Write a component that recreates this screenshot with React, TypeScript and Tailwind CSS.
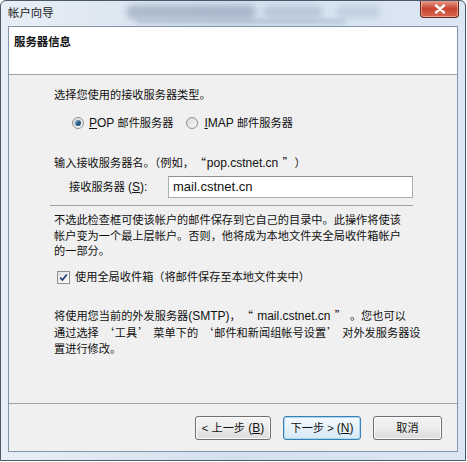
import React from 'react';

function Radio({ checked }: { checked?: boolean }) {
  return (
    <span className="flex h-[12px] w-[12px] items-center justify-center rounded-full border border-[#8e8f8f] bg-gradient-to-br from-[#d9d9d9] to-[#fbfbfb]">
      {checked && (
        <span className="h-[6px] w-[6px] rounded-full bg-gradient-to-br from-[#9ec4e4] via-[#2c628b] to-[#1d3f60]" />
      )}
    </span>
  );
}

function Checkbox() {
  return (
    <span className="flex h-[13px] w-[13px] items-center justify-center border border-[#8e8f8f] bg-gradient-to-br from-[#e2e2e2] to-[#fcfcfc]">
      <svg width="9" height="9" viewBox="0 0 9 9">
        <path d="M1.2 4.6 L3.5 7 L7.8 1.4" fill="none" stroke="#1f3d7a" strokeWidth="1.7" />
      </svg>
    </span>
  );
}

// full-width CJK punctuation (quotes come out narrow from the latin font otherwise)
function Q({ children }: { children: React.ReactNode }) {
  return <span className="inline-block w-[13px] text-center font-['Noto_Sans_CJK_SC',sans-serif]">{children}</span>;
}

function WizardButton({
  children,
  focused,
  width,
}: {
  children: React.ReactNode;
  focused?: boolean;
  width: string;
}) {
  return (
    <button
      className={
        focused
          ? `${width} h-[24px] rounded-[3px] border border-[#3c7fb1] bg-gradient-to-b from-[#f4f9fd] via-[#e6f1fa] to-[#d5e8f6] text-[#111] shadow-[inset_0_0_0_1px_#a8d8f0]`
          : `${width} h-[24px] rounded-[3px] border border-[#707070] bg-gradient-to-b from-[#f4f4f4] via-[#ececec] to-[#dbdbdb] text-[#111] shadow-[inset_0_0_0_1px_#fcfcfc]`
      }
    >
      {children}
    </button>
  );
}

export default function App() {
  return (
    <div className="h-[462px] w-[467px] overflow-hidden bg-white font-['Liberation_Sans','Noto_Sans_CJK_SC',sans-serif] text-[11.2px] text-[#111]">
      <div className="flex h-[461px] w-[466px] flex-col rounded-t-[6px] border border-[#4a5867] bg-gradient-to-r from-[#e8eef5] via-[#d3e1ef] to-[#dce7f3]">
        {/* title bar */}
        <div className="relative flex h-[25px] items-center overflow-hidden pl-[7px]">
          <div className="absolute left-[125px] top-[4px] h-[14px] w-[130px] rounded-full bg-[#7d8fa6] opacity-50 blur-[3px]" />
          <div className="absolute left-[262px] top-[5px] h-[12px] w-[60px] rounded-full bg-[#8fa0b5] opacity-40 blur-[3px]" />
          <div className="absolute left-[335px] top-[5px] h-[12px] w-[45px] rounded-full bg-[#9fb0c4] opacity-40 blur-[3px]" />
          <div className="absolute left-[135px] top-[18px] h-[5px] w-[210px] rounded-full bg-[#8a9cb2] opacity-40 blur-[2px]" />
          <span className="relative text-[11.4px] text-[#1a1a1a]">帐户向导</span>
          <div className="absolute right-[6px] top-[-1px] flex h-[18px] w-[39px] items-center justify-center rounded-b-[4px] border border-t-0 border-[#6b2418] bg-gradient-to-b from-[#e9a799] via-[#c7442f] to-[#d8654f] shadow-[inset_0_0_0_1px_rgba(255,220,210,0.5)]">
            <svg width="12" height="10" viewBox="0 0 12 10">
              <path d="M2 1.5 L10 8.5 M10 1.5 L2 8.5" stroke="#fff" strokeWidth="2.4" strokeLinecap="round" />
            </svg>
          </div>
        </div>

        {/* client area */}
        <div className="mx-[7px] mb-[8px] flex flex-1 flex-col border border-[#8595a8] bg-[#f0f0f0]">
          <div className="h-[48px] border-b border-[#a0a0a0] bg-white pl-[5px] pt-[7px]">
            <div className="text-[11.4px] font-bold leading-[16px] text-[#111]">服务器信息</div>
          </div>

          <div className="flex-1 pl-[41px]">
            <div className="ml-[4px] mt-[12px] leading-[16px]">选择您使用的接收服务器类型。</div>

            <div className="mt-[12px] flex h-[16px] items-center">
              <span className="ml-[22px]">
                <Radio checked />
              </span>
              <span className="ml-[5px] leading-[16px]">
                <span className="text-[12px]">
                  <span className="underline">P</span>OP
                </span>{' '}
                邮件服务器
              </span>
              <span className="ml-[13px]">
                <Radio />
              </span>
              <span className="ml-[6px] leading-[16px]">
                <span className="text-[12px]">
                  <span className="underline">I</span>MAP
                </span>{' '}
                邮件服务器
              </span>
            </div>

            <div className="ml-[4px] mt-[23px] whitespace-nowrap leading-[16px]">
              输入接收服务器名。（例如，<Q>“</Q>
              <span className="text-[12px]">pop.cstnet.cn </span>
              <Q>”</Q>）
            </div>

            <div className="mt-[5px] flex h-[22px] items-center">
              <span className="ml-[19px] w-[99px] leading-[16px]">
                接收服务器 <span className="text-[12px]">(<span className="underline">S</span>):</span>
              </span>
              <div className="flex h-[22px] w-[245px] items-center border border-[#abadb3] border-t-[#8e8f8f] bg-white pl-[4px] text-[13px]">
                mail.cstnet.cn
              </div>
            </div>

            <div className="mt-[7px] h-px w-[363px] bg-[#a0a0a0]" />

            <div className="ml-[4px] mt-[7px] whitespace-nowrap leading-[15.7px]">
              不选此检查框可使该帐户的邮件保存到它自己的目录中。此操作将使该
              <br />
              帐户变为一个最上层帐户。否则，他将成为本地文件夹全局收件箱帐户
              <br />
              的一部分。
            </div>

            <div className="mt-[9px] flex h-[16px] items-center">
              <span className="ml-[7px]">
                <Checkbox />
              </span>
              <span className="ml-[5px] leading-[16px]">使用全局收件箱（将邮件保存至本地文件夹中）</span>
            </div>

            <div className="ml-[4px] mt-[23px] whitespace-nowrap leading-[15.7px]">
              将使用您当前的外发服务器<span className="text-[12px]">(SMTP)</span>，<Q>“</Q>
              <span className="text-[12px]"> mail.cstnet.cn </span>
              <Q>”</Q> 。您也可以
              <br />
              通过选择 <Q>‘</Q>工具<Q>’</Q> 菜单下的 <Q>‘</Q>邮件和新闻组帐号设置<Q>’</Q> 对外发服务器设
              <br />
              置进行修改。
            </div>
          </div>

          <div className="flex h-[48px] justify-end gap-[12px] border-t border-[#a0a0a0] pr-[15px] pt-[12px]">
            <WizardButton width="w-[76px]">
              &lt; 上一步 <span className="text-[12px]">(<span className="underline">B</span>)</span>
            </WizardButton>
            <WizardButton width="w-[78px]" focused>
              下一步 &gt; <span className="text-[12px]">(<span className="underline">N</span>)</span>
            </WizardButton>
            <WizardButton width="w-[69px]">取消</WizardButton>
          </div>
        </div>
      </div>
    </div>
  );
}
